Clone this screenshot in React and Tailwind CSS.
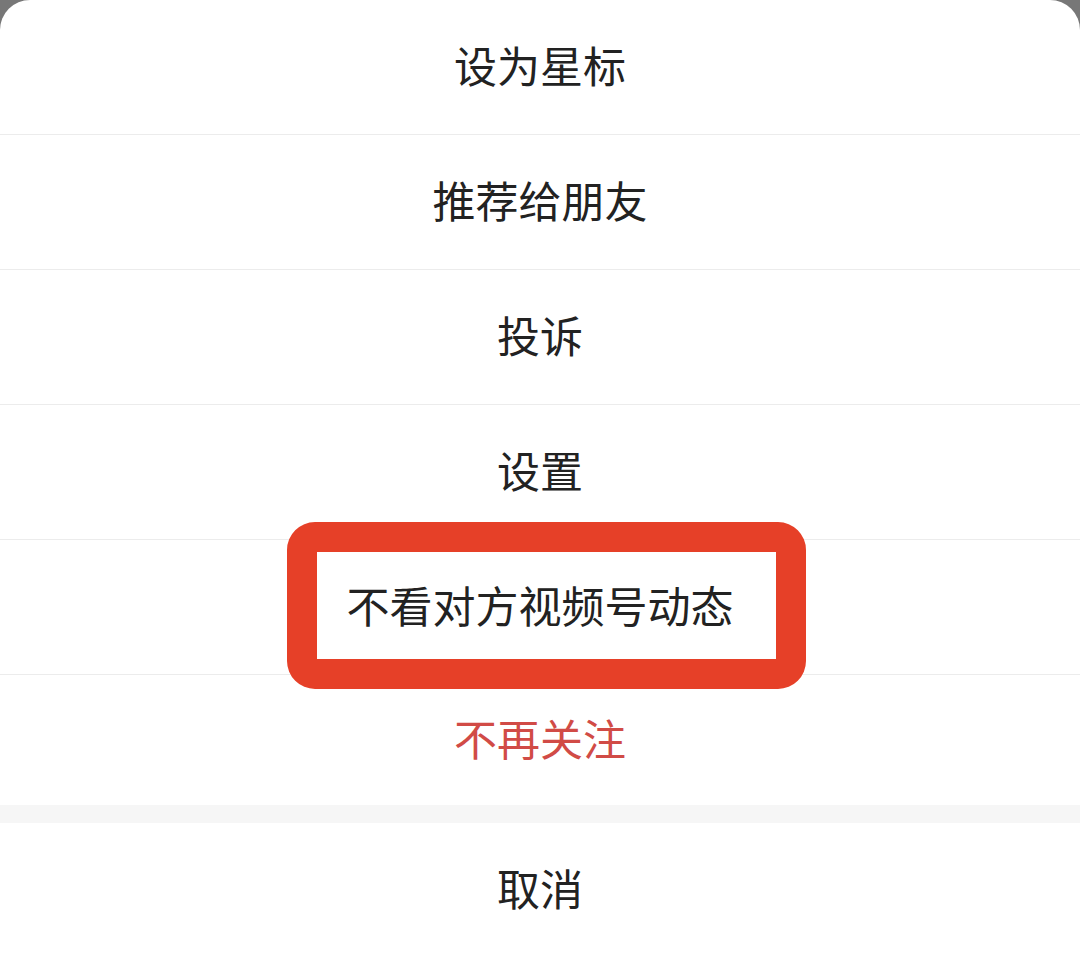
import React from 'react';

// Opciones del menú inferior
const ITEMS = [
    { label: '设为星标' },
    { label: '推荐给朋友' },
    { label: '投诉' },
    { label: '设置' },
    { label: '不看对方视频号动态', highlight: true },
    { label: '不再关注', danger: true },
];

const Row = ({ item, last }) => (
    <div
        className={`relative flex items-center justify-center pb-[5px] ${last ? 'h-[130px]' : 'h-[135px] border-b border-[#ececec]'}`}
    >
        <span className={`text-[43px] leading-none ${item.danger ? 'text-[#d14b46]' : 'text-[#222222]'}`}>
            {item.label}
        </span>
        {item.highlight && (
            // Marco rojo de anotación sobre la opción
            <div className="absolute left-[287px] top-[-18px] w-[519px] h-[167px] border-[30px] border-[#e64028] rounded-[28px] pointer-events-none" />
        )}
    </div>
);

export default function App() {
    return (
        <div
            className="w-[1080px] h-[969px] bg-[#777777] overflow-hidden"
            style={{ fontFamily: '"Noto Sans CJK SC", "Noto Sans", sans-serif' }}
        >
            <div className="h-full bg-white rounded-t-[30px] flex flex-col">
                {ITEMS.map((item, i) => (
                    <Row key={item.label} item={item} last={i === ITEMS.length - 1} />
                ))}
                <div className="h-[18px] bg-[#f6f6f6]" />
                <div className="h-[135px] flex items-center justify-center pb-[6px]">
                    <span className="text-[43px] leading-none text-[#222222]">取消</span>
                </div>
                <div className="flex-1" />
            </div>
        </div>
    );
}
